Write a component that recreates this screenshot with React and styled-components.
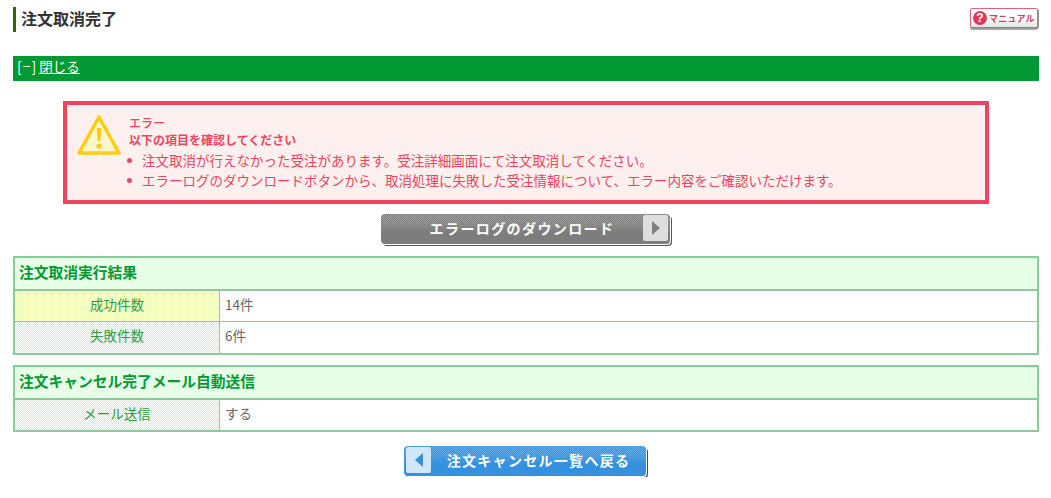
import React from 'react'
import styled, { createGlobalStyle } from 'styled-components'

const GlobalStyle = createGlobalStyle`
    html, body {
        margin: 0;
        background: #fff;
    }
    body {
        font-family: "Noto Sans CJK JP", "Liberation Sans", sans-serif;
        font-size: 13.5px;
        color: #666;
    }
`

const Page = styled.div`
    width: 1026px;
    padding: 7px 12px 0 13px;
`

const Header = styled.div`
    display: flex;
    justify-content: space-between;
    align-items: flex-start;
    height: 49px;
`

const Title = styled.h1`
    margin: 0;
    height: 25px;
    padding-left: 5px;
    border-left: 3px solid #336600;
    font-size: 16px;
    line-height: 23px;
    font-weight: 700;
    color: #333;
`

const ManualButton = styled.a`
    display: flex;
    align-items: center;
    gap: 2px;
    box-sizing: border-box;
    width: 68px;
    height: 20px;
    margin: 1px 1px 0 0;
    padding-left: 2px;
    border: 1px solid #e0607a;
    border-radius: 2px;
    background: linear-gradient(#fff 55%, #e2e2e8);
    box-shadow: 1px 1px 0 #999, 0 2px 0 #aaa;
    font-size: 9px;
    font-weight: 700;
    letter-spacing: 0.2px;
    white-space: nowrap;
    color: #d9405f;
`

const HelpIcon = styled.span`
    flex: none;
    width: 14px;
    height: 14px;
    border-radius: 50%;
    background: #dd3a55;
    color: #fff;
    font-size: 12px;
    font-weight: 700;
    line-height: 14px;
    text-align: center;
    font-family: "Liberation Sans", sans-serif;
`

const CloseBar = styled.div`
    height: 25px;
    padding-left: 4px;
    background: #009933;
    color: #fff;
    font-size: 13.5px;
    line-height: 21px;
`

const CloseMark = styled.span`
    font-size: 14px;
    letter-spacing: 1px;
`

const CloseLink = styled.a`
    color: #fff;
    text-decoration: underline;
    margin-left: 2px;
`

const ErrorBox = styled.div`
    display: flex;
    box-sizing: border-box;
    width: 926px;
    height: 103px;
    margin: 20px 0 10px 50px;
    padding: 9px 0 0 10px;
    border: 4px solid #ee4460;
    background: #fff0f0;
    color: #ee4460;
`

const WarningIcon = styled.svg`
    flex: none;
    width: 44px;
    height: 42px;
    margin-right: 8px;
`

const ErrorBody = styled.div`
    font-size: 12px;
    line-height: 17px;
`

const ErrorHeading = styled.div`
    font-weight: ${p => (p.$bold ? 700 : 500)};
`

const ErrorList = styled.ul`
    margin: 2px 0 0;
    padding: 0 0 0 13px;
    list-style: none;
`

const ErrorItem = styled.li`
    position: relative;
    height: 20px;
    line-height: 20px;
    font-size: 13.5px;

    &::before {
        content: "";
        position: absolute;
        left: -15px;
        top: 8px;
        width: 5px;
        height: 5px;
        border-radius: 50%;
        background: #ee4460;
    }
`

const ButtonRow = styled.div`
    display: flex;
    justify-content: center;
    margin-top: ${p => p.$top || 0}px;
    padding-right: ${p => p.$shift || 0}px;
`

const dither = (a, b) => `repeating-conic-gradient(${a} 0 25%, ${b} 0 50%) 0 0 / 2px 2px`

const BigButton = styled.a`
    display: flex;
    flex-direction: ${p => (p.$back ? 'row' : 'row-reverse')};
    align-items: stretch;
    box-sizing: border-box;
    width: ${p => p.$width}px;
    height: 30px;
    margin-bottom: 1px;
    border-radius: 4px;
    background: linear-gradient(transparent 25%, ${p => p.$base} 62%), ${p => dither(p.$base, p.$light)};
    box-shadow: 1px 1px 0 0 #fff, 2px 2px 0 0 ${p => p.$shadow};
    color: #fff;
    font-size: 14px;
    font-weight: 700;
    letter-spacing: ${p => p.$spacing}px;
`

const ButtonLabel = styled.span`
    flex: 1;
    text-align: center;
    line-height: 29px;
    padding-left: ${p => p.$padLeft || 0}px;
`

const ArrowCap = styled.span`
    display: flex;
    align-items: center;
    justify-content: center;
    width: 25px;
    margin: 1px 2px 3px;
    margin-${p => (p.$back ? 'right' : 'left')}: 0;
    border-radius: 2px;
    background: ${p => p.$bg};
`

const Arrow = styled.svg`
    width: 8px;
    height: 14px;
`

const Section = styled.section`
    box-sizing: border-box;
    margin-top: ${p => p.$top}px;
    border: 2px solid #88cc99;
`

const SectionTitle = styled.h2`
    margin: 0;
    height: 33px;
    padding-left: 4px;
    background: #e6ffe6;
    border-bottom: 2px solid #88cc99;
    box-sizing: border-box;
    color: #009933;
    font-size: 14.75px;
    line-height: 28px;
    font-weight: 700;
`

const Row = styled.div`
    display: flex;
    box-sizing: border-box;
    height: ${p => (p.$first ? 30 : 32)}px;
    border-top: ${p => (p.$first ? 'none' : '1px solid #88cc99')};
`

const RowLabel = styled.div`
    width: 205px;
    box-sizing: border-box;
    flex: none;
    text-align: center;
    line-height: 27px;
    color: #339944;
    font-size: 13.5px;
    border-right: 1px solid #88cc99;
    background: ${p => (p.$hl
        ? dither('#fffff4', '#e8f6b8')
        : dither('#ffffff', '#dfe6df'))};
`

const RowValue = styled.div`
    flex: 1;
    padding-left: 5px;
    line-height: 27px;
    font-size: 13.5px;
    color: #666;
`

export default function App() {
    return (
        <Page>
            <GlobalStyle />
            <Header>
                <Title>注文取消完了</Title>
                <ManualButton><HelpIcon>?</HelpIcon>マニュアル</ManualButton>
            </Header>

            <CloseBar><CloseMark>[−]</CloseMark><CloseLink href="#">閉じる</CloseLink></CloseBar>

            <ErrorBox>
                <WarningIcon viewBox="0 0 44 42">
                    <path d="M22 3 L42 39 L2 39 Z" fill="#fff6cc" stroke="#ffcc11" strokeWidth="3.5" strokeLinejoin="round" />
                    <path d="M19.6 14 h4.8 l-1 13 h-2.8 Z" fill="#ffcc11" />
                    <circle cx="22" cy="32" r="2.6" fill="#ffcc11" />
                </WarningIcon>
                <ErrorBody>
                    <ErrorHeading>エラー</ErrorHeading>
                    <ErrorHeading $bold>以下の項目を確認してください</ErrorHeading>
                    <ErrorList>
                        <ErrorItem>注文取消が行えなかった受注があります。受注詳細画面にて注文取消してください。</ErrorItem>
                        <ErrorItem>エラーログのダウンロードボタンから、取消処理に失敗した受注情報について、エラー内容をご確認いただけます。</ErrorItem>
                    </ErrorList>
                </ErrorBody>
            </ErrorBox>

            <ButtonRow $shift={1}>
                <BigButton $width={289} $spacing={1.4} $base="#7d7d7d" $light="#a0a0a0" $shadow="#555">
                    <ArrowCap $bg="#dedede">
                        <Arrow viewBox="0 0 8 14"><path d="M0 0 L8 7 L0 14 Z" fill="#808080" /></Arrow>
                    </ArrowCap>
                    <ButtonLabel $padLeft={20}>エラーログのダウンロード</ButtonLabel>
                </BigButton>
            </ButtonRow>

            <Section $top={11}>
                <SectionTitle>注文取消実行結果</SectionTitle>
                <Row $first>
                    <RowLabel $hl>成功件数</RowLabel>
                    <RowValue>14件</RowValue>
                </Row>
                <Row>
                    <RowLabel>失敗件数</RowLabel>
                    <RowValue>6件</RowValue>
                </Row>
            </Section>

            <Section $top={10}>
                <SectionTitle>注文キャンセル完了メール自動送信</SectionTitle>
                <Row $first>
                    <RowLabel>メール送信</RowLabel>
                    <RowValue>する</RowValue>
                </Row>
            </Section>

            <ButtonRow $top={14} $shift={2}>
                <BigButton $back $width={242} $spacing={1.3} $base="#3590dd" $light="#66b0ee" $shadow="#446">
                    <ArrowCap $back $bg="#d0e6fa">
                        <Arrow viewBox="0 0 8 14"><path d="M8 0 L0 7 L8 14 Z" fill="#3590dd" /></Arrow>
                    </ArrowCap>
                    <ButtonLabel>注文キャンセル一覧へ戻る</ButtonLabel>
                </BigButton>
            </ButtonRow>
        </Page>
    )
}
